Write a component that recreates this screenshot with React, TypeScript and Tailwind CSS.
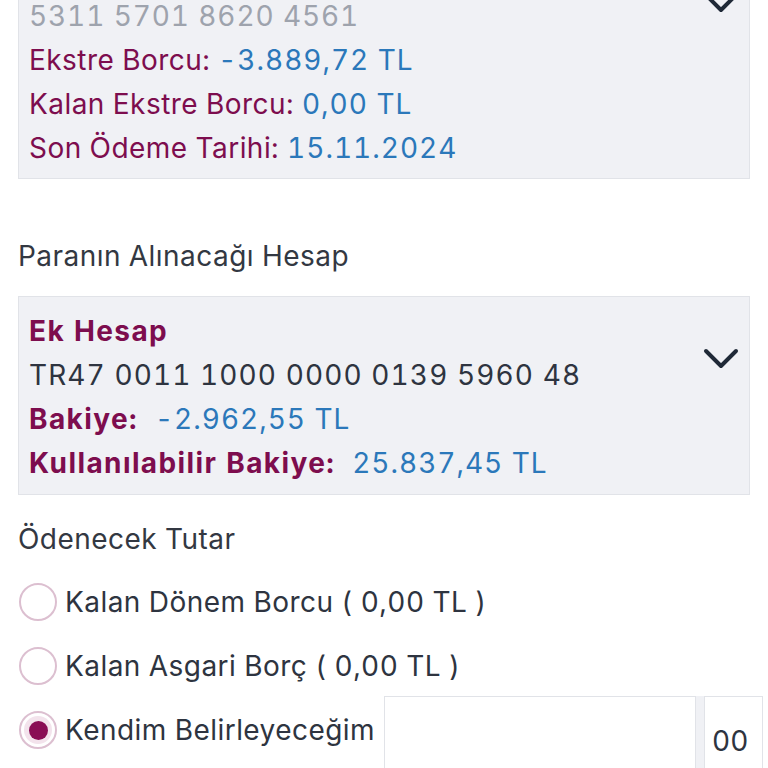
import React from "react";

const Chevron = ({ className }: { className?: string }) => (
  <svg viewBox="0 0 36 22" className={className} fill="none">
    <path d="M3 3 L18 18 L33 3" stroke="#1f2937" strokeWidth="4" strokeLinecap="round" strokeLinejoin="round" />
  </svg>
);

const Radio = ({ checked }: { checked?: boolean }) => (
  <div className="w-[38px] h-[38px] rounded-full border-2 border-[#dcbfd0] bg-white flex items-center justify-center shrink-0">
    {checked && (
      <div className="w-[28px] h-[28px] rounded-full bg-[#f3e3ec] flex items-center justify-center">
        <div className="w-[19px] h-[19px] rounded-full bg-[#8a0d55]" />
      </div>
    )}
  </div>
);

export default function App() {
  return (
    <div
      className="w-[768px] h-[768px] overflow-hidden bg-white text-[28px] tracking-[0.45px] tabular-nums text-[#2e3440]"
      style={{ fontFamily: "Inter, 'Noto Sans', sans-serif" }}
    >
      <div className="px-[18px]">
        <div className="-mt-[20px] flex items-start justify-between border border-[#e1e3e8] bg-[#f0f1f5] pl-[10px] pr-[10px] pt-[13px] pb-[8px] leading-[44px]">
          <div className="flex flex-col">
            <div className="text-[#9ea3ad] tracking-[0.9px]">5311 5701 8620 4561</div>
            <div>
              <span className="text-[#7d0d4e]">Ekstre Borcu: </span>
              <span className="text-[#2b78ba] tracking-[1px]">-3.889,72 TL</span>
            </div>
            <div>
              <span className="text-[#7d0d4e]">Kalan Ekstre Borcu: </span>
              <span className="text-[#2b78ba] tracking-[1px]">0,00 TL</span>
            </div>
            <div>
              <span className="text-[#7d0d4e]">Son Ödeme Tarihi: </span>
              <span className="text-[#2b78ba] tracking-[1px]">15.11.2024</span>
            </div>
          </div>
          <Chevron className="w-[36px] h-[22px] mt-[-2px]" />
        </div>

        <div className="mt-[55px] leading-[44px] text-[#333842]">Paranın Alınacağı Hesap</div>

        <div className="mt-[18px] flex items-start justify-between border border-[#e1e3e8] bg-[#f0f1f5] pl-[10px] pr-[10px] pt-[12px] pb-[9px] leading-[44px]">
          <div className="flex flex-col">
            <div className="font-bold text-[#7d0d4e] tracking-[1.4px]">Ek Hesap</div>
            <div className="text-[#2e3440] tracking-[1.1px]">TR47 0011 1000 0000 0139 5960 48</div>
            <div>
              <span className="font-bold text-[#7d0d4e] tracking-[1.4px]">Bakiye: </span>
              <span className="text-[#2b78ba] ml-[8px] tracking-[1px]">-2.962,55 TL</span>
            </div>
            <div>
              <span className="font-bold text-[#7d0d4e] tracking-[1.4px]">Kullanılabilir Bakiye: </span>
              <span className="text-[#2b78ba] ml-[8px] tracking-[1px]">25.837,45 TL</span>
            </div>
          </div>
          <Chevron className="w-[36px] h-[22px] mt-[39px]" />
        </div>

        <div className="mt-[22px] leading-[44px] text-[#333842]">Ödenecek Tutar</div>
      </div>

      <div className="mt-[22px] flex flex-col gap-[26px] pl-[19px]">
        <div className="flex items-center gap-[8px] h-[38px]">
          <Radio />
          <span>Kalan Dönem Borcu ( 0,00 TL )</span>
        </div>
        <div className="flex items-center gap-[8px] h-[38px]">
          <Radio />
          <span>Kalan Asgari Borç ( 0,00 TL )</span>
        </div>
        <div className="flex items-start">
          <div className="flex items-center gap-[8px] h-[38px] w-[365px] whitespace-nowrap">
            <Radio checked />
            <span>Kendim Belirleyeceğim</span>
          </div>
          <div className="-mt-[15px] flex">
            <div className="w-[312px] h-[90px] border border-[#e1e3e8] bg-white" />
            <div className="w-[8px] h-[90px] bg-[#f0f1f5]" />
            <div className="w-[59px] h-[90px] border border-[#e1e3e8] bg-white flex items-center pl-[7px] tracking-normal">00</div>
          </div>
        </div>
      </div>
    </div>
  );
}
